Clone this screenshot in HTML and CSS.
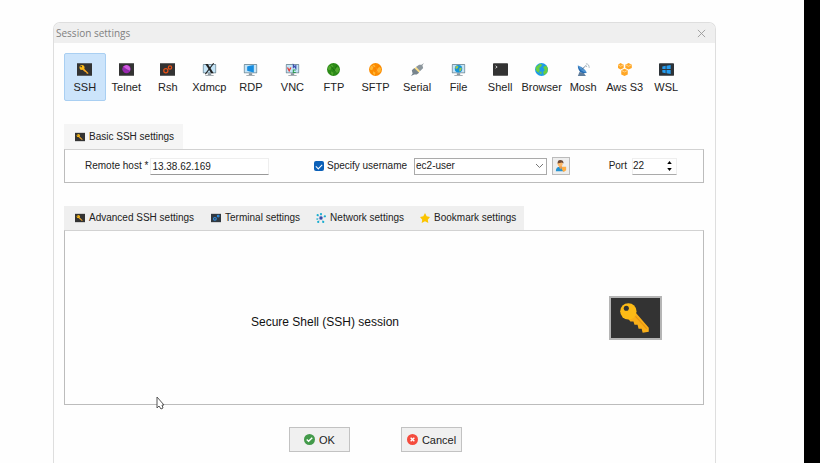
FILE: index.html
```html
<!DOCTYPE html>
<html lang="en">
<head>
<meta charset="utf-8">
<title>Session settings</title>
<link rel="stylesheet" href="styles.css">
</head>
<body>
<svg class="defs" aria-hidden="true">
  <defs>
    <g id="monitor">
      <path d="M7 12h4v2h3v1H4v-1h3z" fill="#8b959c"/>
      <rect x="1" y="1" width="16" height="11" rx="1" fill="#78909c"/>
      <rect x="2" y="2" width="14" height="9" fill="#c5e5f8"/>
    </g>
    <g id="keytile">
      <rect width="18" height="15" fill="#333"/>
      <path d="M8 6l6 6-2 1-1-2-2-1-2-2z" fill="#f9a825"/>
      <circle cx="6" cy="5" r="3" fill="#fdbb16"/>
      <circle cx="5" cy="4" r="1" fill="#333"/>
    </g>
  </defs>
</svg>
<div class="desktop">
<main class="dialog">
  <header class="titlebar">
    <h1>Session settings</h1>
    <button class="close" type="button" aria-label="Close"><svg viewBox="0 0 10 10"><path d="M1 1l8 8M9 1L1 9" stroke="#999" fill="none"/></svg></button>
  </header>
  <nav class="types" aria-label="Session type">
    <button type="button" class="type selected"><svg viewBox="0 0 18 15"><use href="#keytile"/></svg>SSH</button>
    <button type="button" class="type"><svg viewBox="0 0 18 15"><rect width="18" height="15" fill="#333"/><circle cx="9" cy="7" r="5" fill="#9c27b0"/><path d="M9 2a5 5 0 0 1 4 7L9 7 5 4z" fill="#d05ce0"/><path d="M4 7l5 1 4 2" stroke="#7e35a3" fill="none"/></svg>Telnet</button>
    <button type="button" class="type"><svg viewBox="0 0 18 15"><rect width="18" height="15" fill="#333"/><g fill="none" stroke="#e65117" stroke-width="1.500"><circle cx="7" cy="9" r="2.500"/><circle cx="12" cy="5" r="2"/></g></svg>Rsh</button>
    <button type="button" class="type"><svg viewBox="0 0 18 15"><use href="#monitor"/><path d="M4 1h3l7 11h-3z" fill="#222"/><path d="M14 0L4 13" stroke="#222" stroke-width="1.300"/></svg>Xdmcp</button>
    <button type="button" class="type"><svg viewBox="0 0 18 15"><use href="#monitor"/><path d="M5 4l3-1v3H5zM8 3l5-1v4H8zM5 6h3v4l-3-1zM8 6h5v5l-5-1z" fill="#168de0"/></svg>RDP</button>
    <button type="button" class="type"><svg viewBox="0 0 18 15"><use href="#monitor"/><path d="M3 5l2 4 2-4" stroke="#e53935" stroke-width="1.500" fill="none"/><path d="M10 6V2l3 4V2" stroke="#3949ab" stroke-width="1.300" fill="none"/><path d="M13 8h-3v3h3" stroke="#2e9d50" stroke-width="1.300" fill="none"/></svg>VNC</button>
    <button type="button" class="type"><svg viewBox="0 0 18 16"><circle cx="9" cy="8" r="8" fill="#2b8a17"/><path d="M3 4l4-2 2 2-3 2-1 3-3-1zM10 7l4-2 2 2-1 4-3 2-2-3zM6 10l3 2-1 3-2-2z" fill="#51a82e"/><path d="M5 3l8 10M13 3l-3 6" stroke="#176b0d"/></svg>FTP</button>
    <button type="button" class="type"><svg viewBox="0 0 18 16"><circle cx="9" cy="8" r="8" fill="#fb8c00"/><path d="M3 4l4-2 2 2-3 2-1 3-3-1zM10 7l4-2 2 2-1 4-3 2-2-3zM6 10l3 2-1 3-2-2z" fill="#ffb735"/><path d="M5 3l8 10M13 3l-3 6" stroke="#f77c0a"/></svg>SFTP</button>
    <button type="button" class="type"><svg viewBox="0 0 18 16"><path d="M17 0l-2 3 1 3-4 4-5-5 4-3 3 0z" fill="#8c969c"/><path d="M7 5l5 5-2 2-5-5z" fill="#ffe082"/><path d="M1 16l2-3-1-4 3-3 6 6-3 2-3 0z" fill="#78858d"/></svg>Serial</button>
    <button type="button" class="type"><svg viewBox="0 0 18 15"><use href="#monitor"/><circle cx="9" cy="6.500" r="4.500" fill="#1593d6"/><path d="M7 3l2 1-1 2-2 1-1-2zM10 6l3-1-1 4-2 1z" fill="#a2c94b"/></svg>File</button>
    <button type="button" class="type"><svg viewBox="0 0 18 15"><rect width="18" height="15" rx="1" fill="#333"/><path d="M3 3l2 1.500L3 6" stroke="#ddd" fill="none"/></svg>Shell</button>
    <button type="button" class="type"><svg viewBox="0 0 18 16"><circle cx="9" cy="8" r="8" fill="#1e9be9"/><path d="M2 5l5-4 3 1-2 3-2 1 1 3-2 3-3-3zM11 5l4-2 2 4-1 5-4 3-1-4 2-2zM6 12l3-2v4z" fill="#69cf42"/></svg>Browser</button>
    <button type="button" class="type"><svg viewBox="0 0 18 16"><path d="M4 11l-2 5h10l-3-4z" fill="#607d9b"/><path d="M2 3c0 7 5 11 11 9z" fill="#246bb3"/><path d="M2 3c4 1 9 4 11 9C8 11 4 8 2 3z" fill="#4f94d2"/><path d="M7 8l4-4" stroke="#405b78"/><path d="M11 3q2 0 2 2M12 1q4 0 4 5" fill="none" stroke="#9cabb5"/></svg>Mosh</button>
    <button type="button" class="type"><svg viewBox="0 0 18 16"><path d="M1 2l3-2 4 2v4L4 8 1 6zM10 2l4-2 4 2v4l-4 2-4-2zM5 9l4-2 4 2v5l-4 2-4-2z" fill="#ffa726"/><path d="M1 2l3 2 4-2M10 2l4 2 4-2M5 9l4 2 4-2" stroke="#ffdaa0" fill="none"/></svg>Aws S3</button>
    <button type="button" class="type"><svg viewBox="0 0 18 15"><rect width="18" height="15" rx="1" fill="#2d3338"/><path d="M4 4l4-1v4H4zM9 3l5-1v5H9zM4 8h4v4l-4-1zM9 8h5v5l-5-1z" fill="#249cf0"/></svg>WSL</button>
  </nav>

  <section class="basic">
    <div class="tabs" role="tablist">
      <button type="button" class="tab" role="tab" aria-selected="true"><svg viewBox="0 0 18 15"><use href="#keytile"/></svg>Basic SSH settings</button>
    </div>
    <form class="panel fields">
      <div class="field host">
        <label for="host">Remote host *</label>
        <input id="host" type="text" value="13.38.62.169">
      </div>
      <div class="field user">
        <input id="specify" type="checkbox" checked>
        <label for="specify">Specify username</label>
        <select aria-label="Username"><option>ec2-user</option></select>
        <button class="account" type="button" aria-label="Manage users"><svg viewBox="0 0 14 14"><path d="M1 13q0-5 5-5 4 0 5 5z" fill="#2592d0"/><path d="M5 7h3v2L7 11 5 9z" fill="#e99b55"/><circle cx="6" cy="4.500" r="3" fill="#ffb765"/><path d="M3 4q0-4 3-4 4 0 4 4L8 3z" fill="#704a35"/><path d="M8 8h5v4l-3 2-2-3z" fill="#ffad42"/></svg></button>
      </div>
      <div class="field port">
        <label for="port">Port</label>
        <span class="spinner"><input id="port" type="number" value="22"><span class="steps"><button type="button" aria-label="Increase"><svg viewBox="0 0 6 4"><path d="M0 4l3-4 3 4z"/></svg></button><button type="button" aria-label="Decrease"><svg viewBox="0 0 6 4"><path d="M0 0l3 4 3-4z"/></svg></button></span></span>
      </div>
    </form>
  </section>

  <section class="advanced">
    <div class="tabs" role="tablist">
      <button type="button" class="tab" role="tab"><svg viewBox="0 0 18 15"><use href="#keytile"/></svg>Advanced SSH settings</button>
      <button type="button" class="tab" role="tab"><svg viewBox="0 0 18 15"><rect width="18" height="15" fill="#303840"/><g fill="none" stroke="#318de0" stroke-width="2"><circle cx="7" cy="9" r="2.500"/><circle cx="13" cy="4" r="1.500"/></g></svg>Terminal settings</button>
      <button type="button" class="tab" role="tab"><svg viewBox="0 0 18 18"><path d="M9 9L3 4M9 9V2M9 9l7-3M9 9l4 7M9 9l-5 7M9 9l-7 2" stroke="#8bbbd7"/><circle cx="9" cy="9" r="3" fill="#3949ab"/><g fill="#16add0"><circle cx="3" cy="4" r="2"/><circle cx="9" cy="2" r="2"/><circle cx="16" cy="6" r="2"/><circle cx="13" cy="16" r="2"/><circle cx="4" cy="16" r="2"/><circle cx="2" cy="11" r="1.500"/></g></svg>Network settings</button>
      <button type="button" class="tab" role="tab"><svg viewBox="0 0 18 18"><path d="M9 0l3 6 6 1-4 5 1 6-6-3-6 3 1-6-4-5 6-1z" fill="#fbc400"/></svg>Bookmark settings</button>
    </div>
    <div class="panel summary">
      <p>Secure Shell (SSH) session</p>
      <svg class="bigkey" viewBox="0 0 48 39" aria-hidden="true"><path d="M23 13L37 29v4l-6 1-1-4-3 0-1-4-3 0-1-3-3 0-4-5z" fill="#f9ae18"/><circle cx="17" cy="13" r="8" fill="#fdbb16"/><circle cx="15" cy="10" r="2.500" fill="#333"/><path d="M24 18l11 12" stroke="#e89412"/></svg>
    </div>
  </section>

  <footer class="actions">
    <button type="button"><svg viewBox="0 0 12 12"><circle cx="6" cy="6" r="6" fill="#439a4a"/><path d="M3 6l2 2 4-4" stroke="#fff" stroke-width="1.500" fill="none"/></svg>OK</button>
    <button type="button"><svg viewBox="0 0 12 12"><circle cx="6" cy="6" r="6" fill="#f44b3d"/><path d="M4 4l4 4M8 4L4 8" stroke="#fff" stroke-width="1.500"/></svg>Cancel</button>
  </footer>
</main>
</div>
<svg class="cursor" viewBox="0 0 9 14" aria-hidden="true"><path d="M1 1v11l2-2 2 3 2-1-1-3h2z" fill="#fff" stroke="#555"/></svg>
</body>
</html>
```
FILE: styles.css
```css
* { box-sizing: border-box; }
body {
  margin: 0;
  background: #fefefe;
  color: #222;
  font: 10px/14px "Liberation Sans", Arial, sans-serif;
}
button, input, select { font: inherit; color: inherit; margin: 0; padding: 0; }
button { display: flex; align-items: center; justify-content: center; border: 0; background: none; white-space: nowrap; }
svg { display: block; flex: none; }
h1, p { margin: 0; }
.defs { position: absolute; width: 0; height: 0; }

.desktop {
  display: flex;
  min-height: 100vh;
  padding: 22px 88px 0 53px;
  border-right: 16px solid #000;
}
.dialog {
  flex: 1;
  min-width: 0;
  border: 1px solid #dedede;
  border-bottom: 0;
  border-radius: 7px 7px 0 0;
  background: #fefefe;
}
.titlebar {
  display: flex;
  align-items: center;
  justify-content: space-between;
  height: 20px;
  padding: 0 8px 0 2px;
  border-radius: 6px 6px 0 0;
  background: #efefef;
}
.titlebar h1 { font: 10px/14px "Open Sans", "Noto Sans", sans-serif; color: #808080; }
.close { width: 11px; height: 16px; }
.close svg { width: 9px; height: 9px; }

.types {
  display: grid;
  grid-template-columns: repeat(15, minmax(0, 1fr));
  margin: 10px 28px 0 10px;
}
.type {
  flex-direction: column;
  gap: 4px;
  height: 48px;
  padding-top: 3px;
  border: 1px solid transparent;
  border-radius: 2px;
  font-size: 11px;
}
.type svg { width: 15px; height: 13px; }
.selected { background: #cce4fb; border-color: #a9cff2; }

.basic { margin: 23px 11px 0 10px; }
.advanced { margin: 23px 11px 0 10px; }
.tabs { display: flex; }
.tab { gap: 4px; height: 25px; padding: 0 9px 0 11px; background: #efefef; }
.basic .tab { background: #f5f5f5; }
.advanced .tab { height: 24px; }
.tab + .tab { padding: 0 8px; }
.tab svg { width: 10px; height: 10px; }
.panel { border: 1px solid #bcbcbc; border-top-color: #d2d2d2; background: #fefefe; }

.fields { display: flex; align-items: center; justify-content: space-between; height: 34px; padding: 0 26px 0 20px; }
.field { display: flex; align-items: center; }
.field input, .field select { outline: 0; background: #fff; }
.host { gap: 2px; }
.host input { width: 119px; height: 17px; padding: 0 1px; border: 1px solid #eee; border-bottom-color: #999; }
.user { margin-left: 6px; }
.field.user input {
  appearance: none;
  width: 10px;
  height: 10px;
  margin-right: 3px;
  border-radius: 2px;
  background: #0b60b8;
  display: grid;
  place-items: center;
}
.user input::after { content: ""; width: 5px; height: 3px; border: solid #fff; border-width: 0 0 1px 1px; transform: rotate(-45deg); }
.field.user select {
  appearance: none;
  width: 133px;
  height: 17px;
  margin: 0 5px 0 7px;
  padding: 0 1px;
  border: 1px solid #aaa;
  border-radius: 0;
  background: #fff url("data:image/svg+xml,%3Csvg xmlns='http://www.w3.org/2000/svg' viewBox='0 0 7 4'%3E%3Cpath d='M0 0l3.500 3.500L7 0' fill='none' stroke='%23777'/%3E%3C/svg%3E") no-repeat right 3px center / 7px 4px;
}
.account { width: 18px; height: 18px; border: 1px solid #bbb; background: #eee; }
.account svg { width: 12px; height: 12px; }
.port { gap: 5px; }
.spinner { display: flex; width: 45px; height: 17px; border: 1px solid #eee; border-bottom-color: #aaa; }
.spinner input { appearance: textfield; flex: 1; min-width: 0; border: 0; }
.spinner input::-webkit-inner-spin-button { appearance: none; }
.steps { display: flex; flex-direction: column; justify-content: center; gap: 3px; padding-right: 4px; }
.steps button { height: 4px; }
.steps svg { width: 5px; height: 3px; }

.summary { display: flex; align-items: center; min-height: 175px; padding-right: 41px; }
.summary p { flex: 1; padding-right: 24px; padding-top: 9px; text-align: center; font-size: 12px; color: #111; }
.bigkey { width: 53px; height: 44px; border: 2px solid #b5b5b5; background: #333; }

.actions { display: flex; justify-content: center; gap: 51px; padding: 22px 18px 12px 0; }
.actions button { gap: 4px; width: 61px; height: 25px; border: 1px solid #c2c2c2; background: #f0f0f0; font-size: 11px; }
.actions svg { width: 11px; height: 11px; }

.cursor { position: absolute; left: 156px; top: 396px; width: 9px; height: 14px; }
```
